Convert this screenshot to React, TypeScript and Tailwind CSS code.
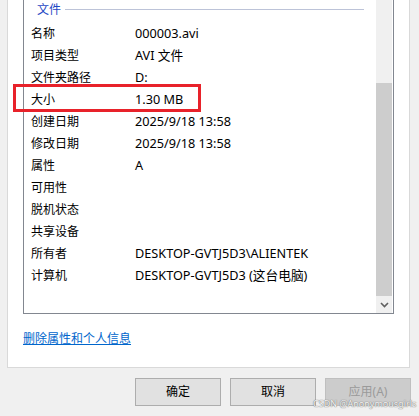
import React from "react";

const rows: [string, string][] = [
  ["名称", "000003.avi"],
  ["项目类型", "AVI 文件"],
  ["文件夹路径", "D:"],
  ["大小", "1.30 MB"],
  ["创建日期", "2025/9/18 13:58"],
  ["修改日期", "2025/9/18 13:58"],
  ["属性", "A"],
  ["可用性", ""],
  ["脱机状态", ""],
  ["共享设备", ""],
  ["所有者", "DESKTOP-GVTJ5D3\\ALIENTEK"],
  ["计算机", "DESKTOP-GVTJ5D3 (这台电脑)"],
];

export default function App() {
  return (
    <div
      className="relative w-[419px] h-[416px] overflow-hidden bg-[#f0f0f0] text-[12px] text-black"
      style={{ fontFamily: '"Segoe UI", "Noto Sans", "Noto Sans CJK SC", sans-serif' }}
    >
      {/* tab panel */}
      <div className="ml-[7px] w-[403px] h-[368px] bg-white border-l border-r border-b border-[#d9d9d9] flex flex-col">
        <div className="ml-[15px] w-[371px] h-[314px] border-l border-r border-b border-[#828790] flex">
          <div className="flex-1 flex flex-col">
            <div className="h-[22px] flex items-center pl-[13px] pb-[3px]">
              <span className="text-[#1f48c4] leading-none">文件</span>
              <div className="ml-[4px] w-[299px] h-px bg-[#bcc3d8]" />
            </div>
            {rows.map(([k, v]) => (
              <div key={k} className="h-[22px] flex items-center pl-[7px] pt-px leading-none">
                <span className="w-[104px]">{k}</span>
                <span className="text-[12.7px] whitespace-nowrap">{v}</span>
              </div>
            ))}
          </div>
          <div className="w-[16px] mr-px bg-[#f0f0f0] flex flex-col">
            <div className="h-[83px]" />
            <div className="h-[213px] bg-[#cdcdcd]" />
            <div className="flex-1 flex items-center justify-center">
              <svg width="9" height="6" viewBox="0 0 9 6">
                <path d="M1 1 L4.5 4.5 L8 1" fill="none" stroke="#606060" strokeWidth="1.6" />
              </svg>
            </div>
          </div>
        </div>
        <div className="ml-[15px] mt-[16px]">
          <span className="text-[#0066cc] underline leading-none">删除属性和个人信息</span>
        </div>
      </div>

      {/* buttons */}
      <div className="mt-[10px] flex justify-end gap-[9px] pr-[8px]">
        <div className="w-[86px] h-[28px] bg-[#e1e1e1] border border-[#adadad] flex items-center justify-center">
          确定
        </div>
        <div className="w-[86px] h-[28px] bg-[#e1e1e1] border border-[#adadad] flex items-center justify-center">
          取消
        </div>
        <div className="w-[86px] h-[28px] bg-[#cccccc] border border-[#bfbfbf] text-[#9a9a9a] flex items-center justify-center">
          应用(A)
        </div>
      </div>

      {/* red highlight */}
      <div className="absolute left-[13px] top-[84px] w-[188px] h-[28px] border-[3px] border-[#e8222a]" />

      {/* watermark */}
      <div className="absolute left-[313px] top-[399px] whitespace-nowrap text-[9px] leading-none text-[#f4f4f4] [text-shadow:0_0_1px_#777,0_0_1px_#777]">
        CSDN @Anonymousgirls
      </div>
    </div>
  );
}
